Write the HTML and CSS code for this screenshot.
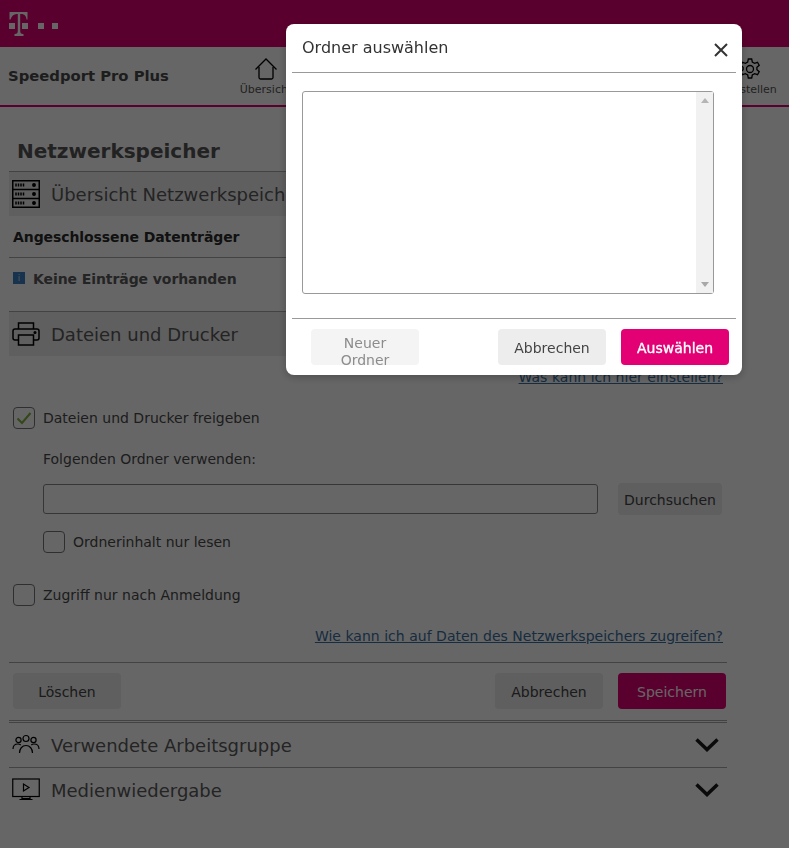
FILE: index.html
```html
<!DOCTYPE html>
<html lang="de">
<head>
<meta charset="utf-8">
<title>Speedport Pro Plus</title>
<link rel="stylesheet" href="styles.css">
</head>
<body>
<header class="topbar">
  <svg class="tlogo" width="50" height="24" viewBox="0 0 50 24" aria-hidden="true">
    <path class="logo-fill" d="M.5 0h18v7.500h-1c-.2-3.300-2-5.500-5.300-5.500h-1v17c0 2 .8 3 2.800 3h.5v2H5.500v-2h.5c2 0 2.800-1 2.800-3V2h-1C4.500 2 2.700 4.200 1.500 7.500h-1z"/>
    <rect class="logo-fill" x="0" y="11" width="6" height="6"/>
    <rect class="logo-fill" x="13" y="11" width="6" height="6"/>
    <rect class="logo-fill" x="29" y="11" width="6" height="6"/>
    <rect class="logo-fill" x="43" y="11" width="6" height="6"/>
  </svg>
</header>
<nav class="navbar">
  <div class="brand">Speedport Pro Plus</div>
  <div class="navitem">
    <svg width="24" height="24" viewBox="0 0 24 24" class="line-icon" aria-hidden="true"><path d="M1.500 12.500 12 2l10.500 10.500"/><path d="M5 10v10.500a1.500 1.500 0 0 0 1.500 1.500h11a1.500 1.500 0 0 0 1.500-1.500V10"/></svg>
    <span>Übersicht</span>
  </div>
  <div class="navitem navitem-end">
    <svg width="24" height="24" viewBox="0 0 24 24" class="line-icon" aria-hidden="true"><circle cx="12" cy="12" r="3.500"/><path d="M10.300 2h3.400l.6 3 2.300 1.300 2.900-1 1.700 3-2.300 2v2.400l2.300 2-1.700 3-2.900-1-2.300 1.300-.6 3h-3.400l-.6-3-2.300-1.300-2.900 1-1.700-3 2.300-2v-2.400l-2.300-2 1.700-3 2.900 1 2.300-1.300z"/></svg>
    <span>Einstellen</span>
  </div>
</nav>

<main class="content">
  <h1 class="title">Netzwerkspeicher</h1>

  <div class="section-head shaded">
    <svg width="28" height="28" viewBox="0 0 28 28" class="icon-black" aria-hidden="true"><rect x=".75" y=".75" width="26.500" height="26.500"/><path d="M1 9.500h26M1 18.500h26M4 3.500v3M6.500 3.500v3M9 3.500v3M11.500 3.500v3M4 12.500v3M6.500 12.500v3M9 12.500v3M11.500 12.500v3M4 21.500v3M6.500 21.500v3M9 21.500v3M11.500 21.500v3"/><circle class="dot" cx="22" cy="5" r="1.200"/><circle class="dot" cx="22" cy="14" r="1.200"/><circle class="dot" cx="22" cy="23" r="1.200"/></svg>
    <span>Übersicht Netzwerkspeicher</span>
  </div>

  <div class="subhead">Angeschlossene Datenträger</div>
  <div class="notice">
    <span class="info">i</span>
    <span>Keine Einträge vorhanden</span>
  </div>

  <div class="section-head shaded">
    <svg width="28" height="24" viewBox="0 0 28 24" class="icon-black" aria-hidden="true"><path d="M6.500 7V1h15v6"/><path d="M6.500 18H3a2 2 0 0 1-2-2V9a2 2 0 0 1 2-2h22a2 2 0 0 1 2 2v7a2 2 0 0 1-2 2h-3.500"/><rect x="6.500" y="13" width="15" height="10"/><circle cx="23" cy="10.500" r=".8"/></svg>
    <span>Dateien und Drucker</span>
  </div>

  <div class="panel">
    <div class="link-row link-first"><a href="#">Was kann ich hier einstellen?</a></div>

    <label class="check-row first-check">
      <span class="box"><svg width="16" height="14" viewBox="0 0 16 14" aria-hidden="true"><path class="tick" d="M1.500 7.500 6 12 14.500 2"/></svg></span>
      <span>Dateien und Drucker freigeben</span>
    </label>

    <div class="indent">
      <div class="field-label">Folgenden Ordner verwenden:</div>
      <div class="field-row">
        <input class="textfield" type="text">
        <button class="btn btn-search" type="button">Durchsuchen</button>
      </div>
      <label class="check-row readonly">
        <span class="box"></span>
        <span>Ordnerinhalt nur lesen</span>
      </label>
    </div>

    <label class="check-row login">
      <span class="box"></span>
      <span>Zugriff nur nach Anmeldung</span>
    </label>

    <div class="link-row link-second"><a href="#">Wie kann ich auf Daten des Netzwerkspeichers zugreifen?</a></div>
  </div>

  <div class="actions">
    <button class="btn" type="button">Löschen</button>
    <div class="actions-right">
      <button class="btn" type="button">Abbrechen</button>
      <button class="btn btn-primary" type="button">Speichern</button>
    </div>
  </div>

  <div class="section-head collapsed first-collapsed">
    <svg width="28" height="22" viewBox="0 0 28 22" class="icon-black icon-thin" aria-hidden="true"><circle cx="6.500" cy="6" r="2.600"/><circle cx="14" cy="4.500" r="3"/><circle cx="21.500" cy="6" r="2.600"/><path d="M1 15c0-3 2-5 5-5 1 0 2 .3 2.700 1M27 15c0-3-2-5-5-5-1 0-2 .3-2.700 1M7.500 19c0-4 2.500-7.500 6.500-7.500s6.500 3.500 6.500 7.500"/></svg>
    <span>Verwendete Arbeitsgruppe</span>
    <svg class="chev" width="26" height="16" viewBox="0 0 26 16" aria-hidden="true"><path d="M2.500 2.500 13 12.500 23.500 2.500"/></svg>
  </div>
  <div class="section-head collapsed">
    <svg width="28" height="24" viewBox="0 0 28 24" class="icon-black icon-thin" aria-hidden="true"><rect x=".75" y="1" width="26.500" height="17.500"/><path d="M11.500 6v7l5.500-3.500z"/><path d="M10 18.500v2h8v-2M7.500 21.500h13"/></svg>
    <span>Medienwiedergabe</span>
    <svg class="chev" width="26" height="16" viewBox="0 0 26 16" aria-hidden="true"><path d="M2.500 2.500 13 12.500 23.500 2.500"/></svg>
  </div>
</main>

<div class="backdrop"></div>

<div class="modal" role="dialog">
  <div class="modal-head">
    <span class="modal-title">Ordner auswählen</span>
    <svg class="close" width="14" height="14" viewBox="0 0 14 14" aria-hidden="true"><path d="M1 1l12 12M13 1 1 13"/></svg>
  </div>
  <div class="modal-body">
    <div class="listbox">
      <div class="scrollbar">
        <span class="arrow-up"></span>
        <span class="arrow-down"></span>
      </div>
    </div>
  </div>
  <div class="modal-foot">
    <button class="btn btn-disabled" type="button" disabled>Neuer Ordner</button>
    <div class="actions-right">
      <button class="btn" type="button">Abbrechen</button>
      <button class="btn btn-primary btn-strong" type="button">Auswählen</button>
    </div>
  </div>
</div>
</body>
</html>
```

FILE: styles.css
```css
* { box-sizing: border-box; }

html, body { margin: 0; padding: 0; }

body {
  width: 789px;
  height: 848px;
  overflow: hidden;
  background: #fff;
  color: #4a4a4a;
  font-family: "DejaVu Sans", Verdana, sans-serif;
  font-size: 14px;
}

.topbar {
  height: 47px;
  background: #e20074;
  padding: 12px 0 0 9px;
}

.tlogo { display: block; }
.logo-fill { fill: #fff; }

.navbar {
  height: 60px;
  border-bottom: 2px solid #e20074;
  background: #fff;
  display: flex;
  align-items: center;
  padding-left: 8px;
}

.brand {
  width: 233px;
  font-size: 14.800px;
  font-weight: 700;
  color: #4a4a4a;
  padding-bottom: 2px;
}

.navitem {
  width: 50px;
  display: flex;
  flex-direction: column;
  align-items: center;
  gap: 2px;
  font-size: 11px;
  white-space: nowrap;
  color: #555;
}

.navitem-end { margin-left: 434px; }

.line-icon {
  fill: none;
  stroke: #000;
  stroke-width: 1.300;
}

.content {
  margin-left: 9px;
  width: 718px;
}

.title {
  margin: 0;
  height: 65px;
  padding: 30px 0 0 8px;
  font-size: 20px;
  line-height: 28px;
  font-weight: 700;
  color: #555;
  border-bottom: 1px solid #a8a8a8;
}

.section-head {
  height: 44px;
  display: flex;
  align-items: center;
  gap: 11px;
  padding-left: 3px;
  font-size: 18px;
  color: #5a5a5a;
}

.shaded { background: #ededed; }

.icon-black {
  fill: none;
  stroke: #000;
  stroke-width: 1.500;
  flex: none;
}

.icon-thin { stroke-width: 1.200; }
.dot { fill: #000; }

.subhead {
  height: 42px;
  padding: 0 0 0 4px;
  display: flex;
  align-items: center;
  font-size: 14px;
  font-weight: 700;
  letter-spacing: -.08px;
  color: #2b2b2b;
  border-bottom: 1px solid #a8a8a8;
}

.notice {
  height: 54px;
  padding: 0 0 12px 4px;
  display: flex;
  align-items: center;
  gap: 8px;
  font-weight: 700;
  font-size: 14px;
  letter-spacing: -.08px;
  color: #5a5a5a;
  border-bottom: 1px solid #a8a8a8;
}

.info {
  width: 12px;
  height: 12px;
  margin-top: -1px;
  background: #3a7fc1;
  color: #cde;
  font-size: 9px;
  font-weight: 400;
  line-height: 12px;
  text-align: center;
}

.panel { padding: 0 4px 0 4px; }

.link-row {
  text-align: right;
  font-size: 14px;
  line-height: 20px;
  letter-spacing: .02px;
}

.link-row a { color: #3a6f9f; text-decoration: underline; }

.link-first { padding-top: 11px; }

.check-row {
  display: flex;
  align-items: center;
  gap: 8px;
  font-size: 14px;
}

.first-check { margin-top: 20px; }

.box {
  width: 22px;
  height: 22px;
  flex: none;
  border: 1px solid #777;
  border-radius: 4px;
  background: #fff;
  display: flex;
  align-items: center;
  justify-content: center;
}

.tick {
  fill: none;
  stroke: #7fb23c;
  stroke-width: 2;
}

.indent { padding-left: 30px; }

.field-label {
  margin-top: 20px;
  line-height: 20px;
}

.field-row {
  margin-top: 14px;
  display: flex;
  align-items: center;
  gap: 20px;
}

.textfield {
  width: 555px;
  height: 30px;
  border: 1px solid #888;
  border-radius: 3px;
  background: #fff;
  padding: 0;
  margin: 0;
}

.btn {
  width: 108px;
  height: 36px;
  padding: 2px 10px 0;
  border: 0;
  border-radius: 4px;
  background: #ededed;
  color: #444;
  font-family: inherit;
  font-size: 14px;
  line-height: 17px;
}

.btn-search {
  width: 104px;
  height: 32px;
  padding: 2px 0 0;
}

.readonly { margin-top: 16px; }
.login { margin-top: 31px; }
.link-second { margin-top: 20px; }

.actions {
  margin-top: 16px;
  height: 59px;
  padding: 10px 1px 0 4px;
  border-top: 1px solid #a8a8a8;
  border-bottom: 1px solid #a8a8a8;
  display: flex;
  justify-content: space-between;
  align-items: flex-start;
}

.actions-right {
  display: flex;
  gap: 15px;
}

.btn-primary {
  background: #e20074;
  color: #fff;
}

.btn-strong {
  -webkit-text-stroke: .35px #fff;
}

.collapsed {
  height: 44px;
  border-bottom: 1px solid #a8a8a8;
}

.collapsed:last-child { border-bottom: 0; }

.first-collapsed {
  height: 46px;
  margin-top: 1px;
  border-top: 1px solid #a8a8a8;
}

.chev {
  margin-left: auto;
  margin-right: 7px;
  fill: none;
  stroke: #1a1a1a;
  stroke-width: 3.500;
}

.backdrop {
  position: fixed;
  inset: 0;
  background: rgba(0, 0, 0, .6);
}

.modal {
  position: fixed;
  left: 286px;
  top: 24px;
  width: 456px;
  height: 351px;
  background: #fff;
  border-radius: 8px;
  padding: 0 6px;
  box-shadow: 0 2px 8px rgba(0, 0, 0, .25);
}

.modal-head {
  height: 49px;
  padding: 0 8px 0 10px;
  border-bottom: 1px solid #999;
  display: flex;
  align-items: flex-start;
  justify-content: space-between;
}

.modal-title {
  font-size: 16px;
  line-height: 22px;
  margin-top: 13px;
  color: #333;
}

.close {
  margin: 19px 0 0 0;
  fill: none;
  stroke: #333;
  stroke-width: 2;
}

.modal-body {
  padding: 18px 22px 24px 10px;
  border-bottom: 1px solid #999;
}

.listbox {
  height: 203px;
  border: 1px solid #999;
  border-radius: 3px;
  display: flex;
  justify-content: flex-end;
  background: #fff;
}

.scrollbar {
  width: 17px;
  background: #f1f1f1;
  display: flex;
  flex-direction: column;
  justify-content: space-between;
  align-items: center;
  padding: 6px 0;
}

.arrow-up, .arrow-down {
  width: 0;
  height: 0;
  border-left: 4px solid transparent;
  border-right: 4px solid transparent;
}

.arrow-up { border-bottom: 5px solid #b5b5b5; }
.arrow-down { border-top: 5px solid #a8a8a8; }

.modal-foot {
  padding: 10px 7px 0 19px;
  display: flex;
  justify-content: space-between;
  align-items: flex-start;
}

.btn-disabled {
  background: #f4f4f4;
  color: #8c8c8c;
  padding: 6px 10px 0;
  display: block;
}
```
